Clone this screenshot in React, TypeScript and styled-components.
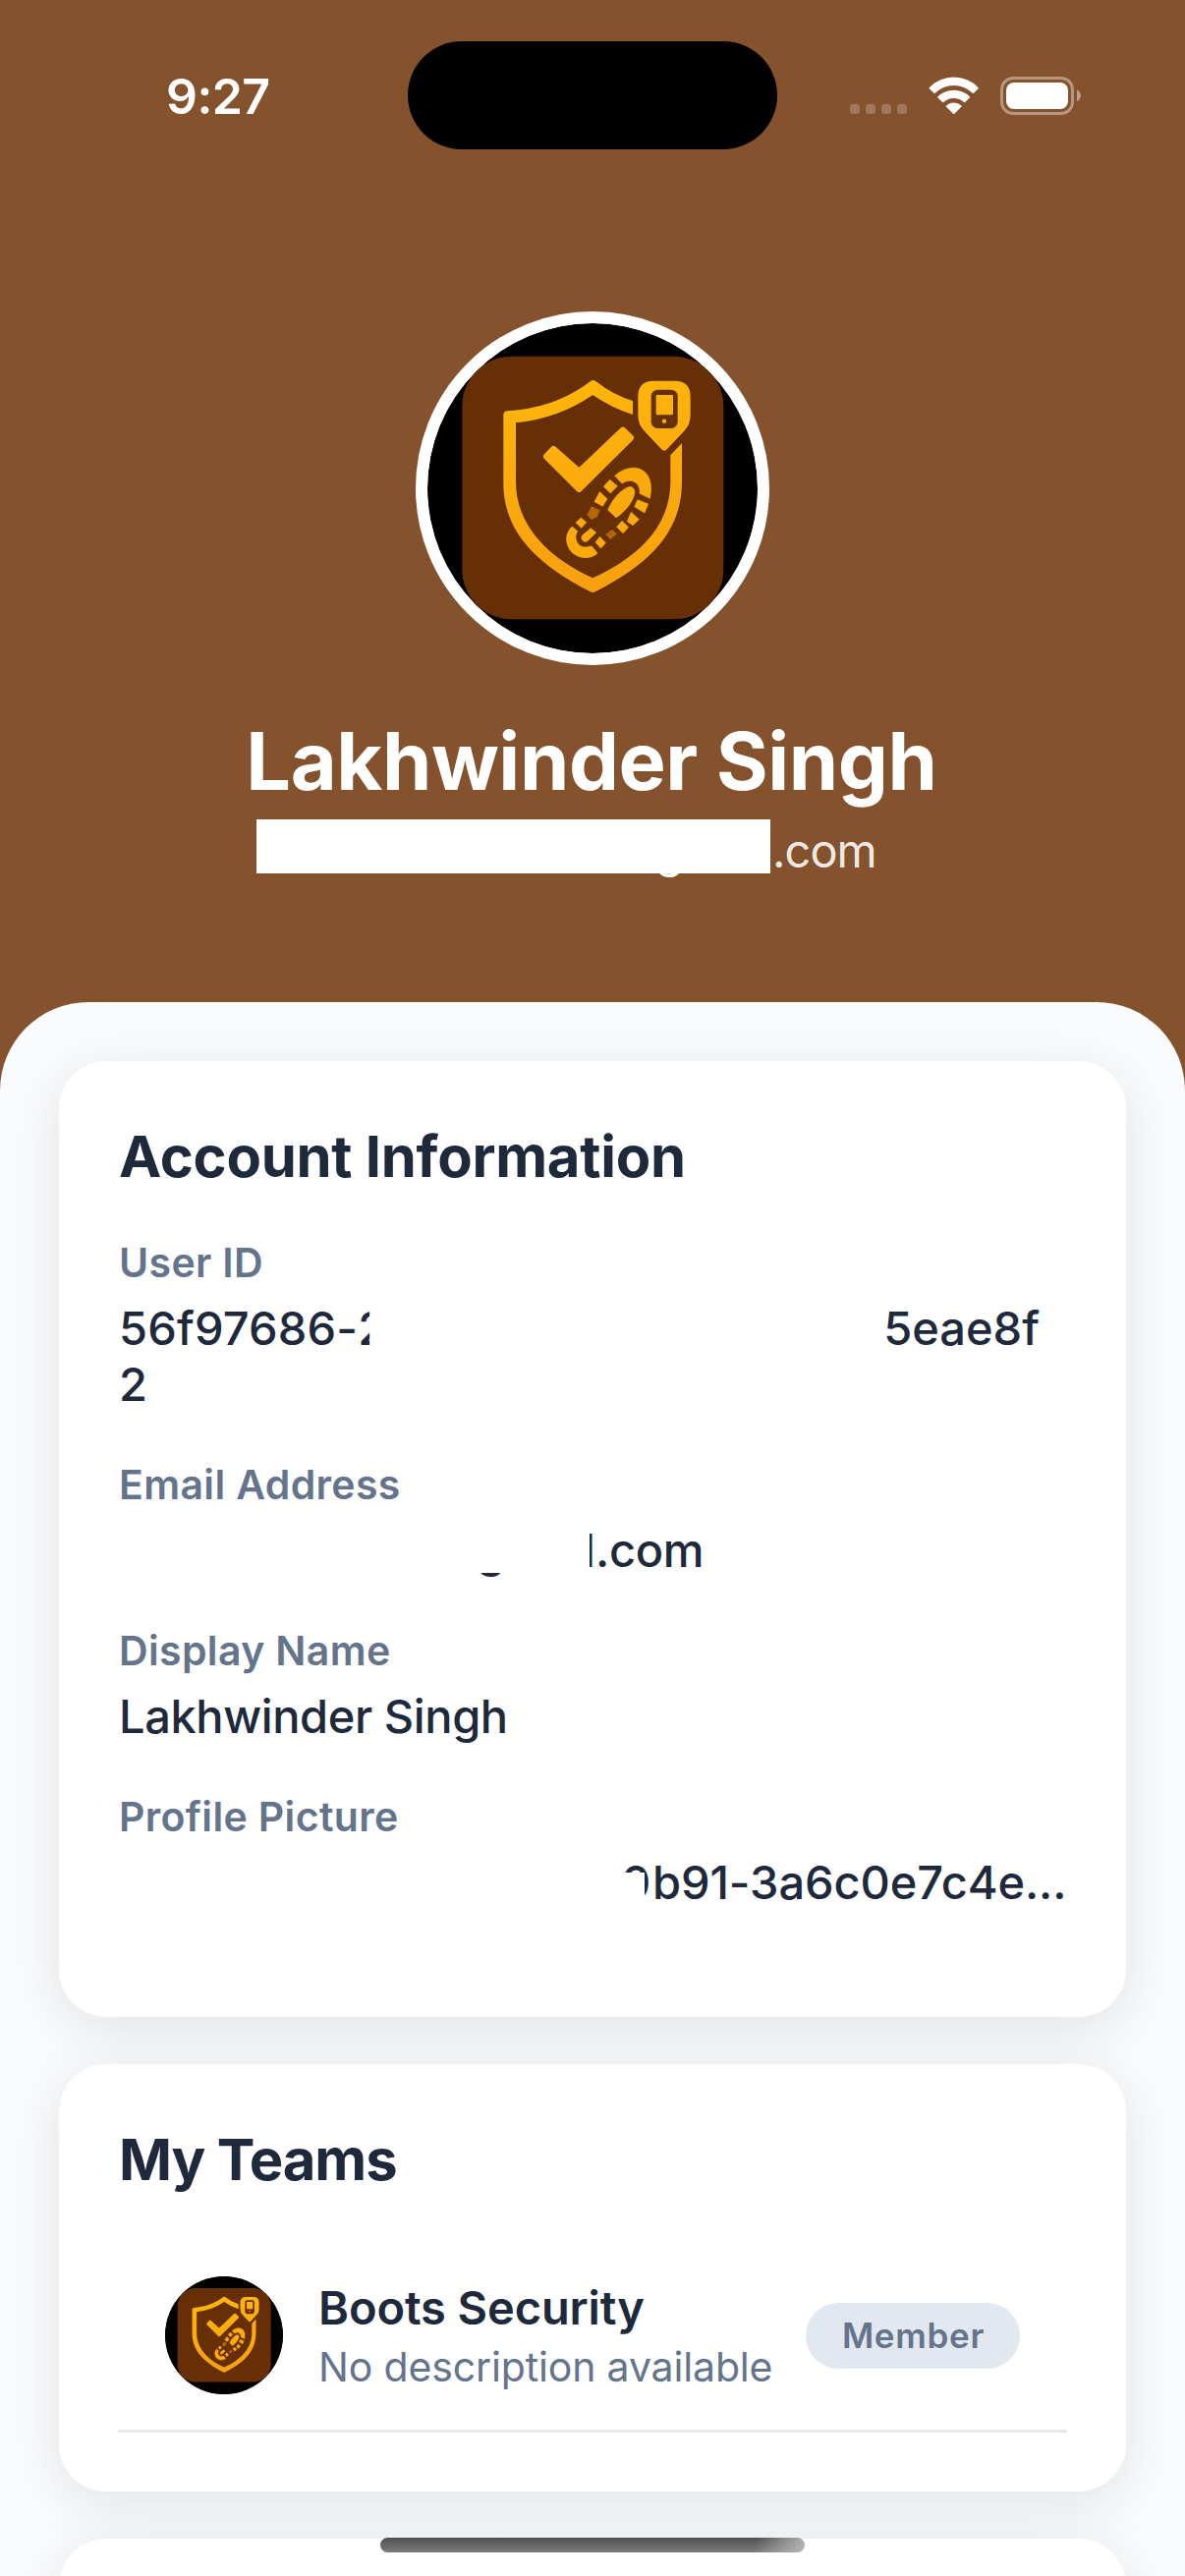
import React from "react";
import styled, { createGlobalStyle } from "styled-components";

const GlobalStyle = createGlobalStyle`
  *, *::before, *::after { box-sizing: border-box; }
  html, body { margin: 0; padding: 0; }
  body { overflow: hidden; background: #84522d; }
`;

const Screen = styled.div`
  position: relative;
  display: flex;
  flex-direction: column;
  width: 1206px;
  height: 2622px;
  overflow: hidden;
  background: #84522d;
  color: #1e293b;
  font-family: Inter, "Liberation Sans", sans-serif;
`;

/* ---------- status bar ---------- */

const StatusBar = styled.div`
  display: grid;
  grid-template-columns: 415px 376px 415px;
  height: 186px;
  flex: none;
`;

const Clock = styled.div`
  padding: 67px 0 0 169px;
  color: #fff;
  font-size: 50px;
  font-weight: 600;
  line-height: 62px;
  letter-spacing: -0.6px;
`;

const Island = styled.div`
  margin-top: 42px;
  height: 110px;
  border-radius: 55px;
  background: #000;
`;

const StatusIcons = styled.div`
  display: flex;
  align-items: flex-start;
  padding: 78px 0 0 74px;
`;

/* ---------- header ---------- */

const Header = styled.header`
  display: flex;
  flex-direction: column;
  align-items: center;
  height: 834px;
  flex: none;
  padding-top: 131px;
`;

const Avatar = styled.div<{ $size: number; $border?: number }>`
  flex: none;
  width: ${(p) => p.$size}px;
  height: ${(p) => p.$size}px;
  border: ${(p) => p.$border ?? 0}px solid #fff;
  border-radius: 50%;
  overflow: hidden;
  background: ${(p) => (p.$border ? "#fff" : "#000")};

  svg {
    display: block;
    width: 100%;
    height: 100%;
    border-radius: 50%;
  }
`;

const ProfileName = styled.h1`
  margin: 49px 2px 0 0;
  color: #fff;
  font-size: 81px;
  font-weight: 700;
  line-height: 98px;
  letter-spacing: -0.42px;
  white-space: nowrap;
`;

const ProfileEmail = styled.div`
  display: flex;
  align-self: flex-start;
  margin: 10px 0 0 261px;
  font-size: 47px;
  line-height: 57px;
`;

const HiddenAddress = styled.span`
  width: 523px;
  height: 55px;
  padding: 3px 0 0 406px;
  background: #fff;
  color: #fff;
`;

const EmailDomain = styled.span`
  padding: 3px 0 0 2px;
  color: rgba(255, 255, 255, 0.9);
  letter-spacing: -1px;
`;

/* ---------- sheet and cards ---------- */

const Sheet = styled.main`
  display: flex;
  flex-direction: column;
  gap: 48px;
  flex: none;
  height: 1700px;
  padding: 60px 60px 0;
  border-radius: 90px 90px 0 0;
  background: #f9fbfc;
`;

const Card = styled.section`
  flex: none;
  padding: 60px;
  border-radius: 48px;
  background: #fff;
  box-shadow: 0 12px 60px rgba(0, 0, 0, 0.1);
`;

const CardTitle = styled.h2<{ $tracking: number }>`
  margin: 0 0 46px;
  padding-left: 1px;
  font-size: 58px;
  font-weight: 700;
  line-height: 74px;
  letter-spacing: ${(p) => p.$tracking}px;
`;

const Field = styled.div`
  display: flex;
  flex-direction: column;
  gap: 13px;
  margin-bottom: 49px;
  padding-left: 1px;
`;

const FieldLabel = styled.div`
  color: #64748b;
  font-size: 41px;
  font-weight: 600;
  line-height: 50px;
  letter-spacing: 0.35px;
`;

const FieldValue = styled.div`
  font-size: 47px;
  font-weight: 500;
  line-height: 57px;
  white-space: nowrap;
`;

const ValueLine = styled.div`
  display: flex;
  height: 57px;
`;

const Segment = styled.span<{ $tracking?: number }>`
  letter-spacing: ${(p) => p.$tracking ?? 0}px;
`;

const Blank = styled.span<{ $width: number }>`
  flex: none;
  width: ${(p) => p.$width}px;
`;

/* A glyph of which only a part stays visible beside the blanked-out text. */
const PartialGlyph = styled.span<{ $width: number; $clip: string }>`
  flex: none;
  width: ${(p) => p.$width}px;
  clip-path: ${(p) => p.$clip};
`;

/* ---------- teams ---------- */

const TeamRow = styled.div`
  display: flex;
  align-items: center;
  gap: 36px;
  padding: 36px 48px;
  border-bottom: 3px solid #e5e7eb;
`;

const TeamText = styled.div`
  display: flex;
  flex: 1;
  flex-direction: column;
  gap: 7px;
  min-width: 0;
  white-space: nowrap;
`;

const TeamName = styled.div`
  font-size: 47px;
  font-weight: 600;
  line-height: 57px;
  letter-spacing: -0.1px;
`;

const TeamDescription = styled.div`
  color: #64748b;
  font-size: 41px;
  line-height: 50px;
  letter-spacing: -0.15px;
`;

const RoleBadge = styled.div`
  flex: none;
  margin-left: -36px;
  padding: 12px 36px 12px 37px;
  border-radius: 36px;
  background: #e2e8f0;
  color: #64748b;
  font-size: 35px;
  font-weight: 600;
  line-height: 43px;
  letter-spacing: 0.7px;
`;

const EmptyCard = styled(Card)`
  height: 300px;
`;

const HomeIndicator = styled.div`
  position: absolute;
  left: 387px;
  bottom: 24px;
  width: 432px;
  height: 15px;
  border-radius: 7.5px;
  background:
    linear-gradient(100deg, rgba(190, 190, 190, 0) 88%, rgba(190, 190, 190, 0.9) 100%),
    linear-gradient(#4e4f50, #7c7c7c);
`;

function SystemIcons() {
  return (
    <svg width="236" height="40" viewBox="15 18 236 40" fill="#fff">
      <g opacity="0.22">
        <rect x="15" y="46" width="10" height="10" rx="3" />
        <rect x="31" y="46" width="10" height="10" rx="3" />
        <rect x="47" y="46" width="10" height="10" rx="3" />
        <rect x="63" y="46" width="10" height="10" rx="3" />
      </g>
      <path d="M95.7 29.2A34.6 34.6 0 0 1 145.7 29.2Q146 29.8 145.4 30.4L141 34.8Q140.4 35.2 139.8 34.7A27.8 27.8 0 0 0 101.6 34.7Q101 35.2 100.4 34.8L96 30.4Q95.4 29.8 95.7 29.2Z" />
      <path d="M104.3 38.5A23.3 23.3 0 0 1 137.1 38.5Q137.4 39 136.9 39.5L132.2 44Q131.6 44.4 131 44A15.4 15.4 0 0 0 110.4 44Q109.8 44.4 109.2 44L104.5 39.5Q104 39 104.3 38.5Z" />
      <path d="M113 47.4A12 12 0 0 1 128.4 47.4Q129 48 128.4 48.7L121.3 55.7Q120.7 56.2 120.1 55.7L113 48.7Q112.4 48 113 47.4Z" />
      <rect x="169.5" y="19.5" width="72" height="36" rx="11.5" fill="none" stroke="#fff" strokeWidth="3" opacity="0.4" />
      <rect x="174" y="24" width="63" height="27" rx="8" />
      <path d="M246 31.4C248.6 32.5 250 34.7 250 37.3S248.6 42.1 246 43.2Z" opacity="0.45" />
    </svg>
  );
}

function ShieldLogo({ id }: { id: string }) {
  const gold = `url(#${id})`;
  return (
    <svg viewBox="105 87 1008 1008">
      <defs>
        <linearGradient id={id} gradientUnits="userSpaceOnUse" x1="560" y1="260" x2="640" y2="910">
          <stop offset="0" stopColor="#ffb50a" />
          <stop offset="1" stopColor="#f6a00f" />
        </linearGradient>
      </defs>
      <rect x="105" y="87" width="1008" height="1008" fill="#000" />
      <rect x="211" y="188" width="798" height="803" rx="152" fill="#672f06" />
      <g fill={gold}>
        <path d="M603 264Q611 258 619 264Q672 306 732 324V366Q668 346 610 306Q505 378 375 391V570C375 700 468 800 610 865C752 800 847 705 847 570V490L882 453V570C882 720 790 819 619 906Q610 912 601 906C430 819 337 718 337 575V368Q337 355 350 355C440 349 528 322 603 264Z" />
        <path d="M490 472L568 541L702 414L725 437L568 593L469 494Z" stroke={gold} strokeWidth="20" strokeLinejoin="round" />
        <path d="M796 263H860Q908 263 908 311V369Q908 396 888 417L837 471Q828 481 819 471L768 417Q748 396 748 369V311Q748 263 796 263Z" />
      </g>
      <rect x="788" y="290" width="81" height="118" rx="20" fill="#672f06" />
      <rect x="803" y="306" width="52" height="61" rx="3" fill={gold} />
      <circle cx="828" cy="386" r="6.5" fill={gold} />
      <g transform="translate(480 480)" fill="#fbaa0c" stroke="#fbaa0c" strokeWidth="2" strokeLinejoin="round">
        <path d="M197 73C220 53 245 45 267 50C301 58 315 96 304 142L273 127C276 105 263 89 243 88C234 88 228 91 219 96Z" />
        <path d="M176 177C187 152 209 118 240 107C252 104 260 115 257 128C252 155 225 185 201 201Z" />
        <path d="M182 85L205 104L184 126L163 106Z" />
        <path d="M151 122L174 143L160 166L135 152Z" />
        <path d="M94 201L110 215L95 232L78 216Z" />
        <path d="M67 228L84 243C73 254 78 275 88 284C100 294 113 291 126 287L144 309C134 319 121 323 106 323C78 322 53 302 50 272C49 253 54 240 67 228Z" />
        <path d="M124 233L140 246L115 271C103 281 88 265 100 253Z" />
        <path d="M267 146L299 159L288 186L257 167Z" />
        <path d="M247 184L271 206L252 224L235 212Z" />
        <path d="M219 211L239 230L222 248L203 229Z" />
        <path d="M152 259L169 278L154 294L138 276Z" />
        <g fill="#b46509" stroke="none">
          <path d="M126 166L152 178L143 198L126 208L112 191Z" />
          <path d="M188 237L204 250L184 267L169 252Z" />
        </g>
      </g>
    </svg>
  );
}

export default function App() {
  return (
    <>
      <GlobalStyle />
      <Screen>
        <StatusBar>
          <Clock>9:27</Clock>
          <Island />
          <StatusIcons>
            <SystemIcons />
          </StatusIcons>
        </StatusBar>

        <Header>
          <Avatar $size={360} $border={12}>
            <ShieldLogo id="gold-profile" />
          </Avatar>
          <ProfileName>Lakhwinder Singh</ProfileName>
          <ProfileEmail>
            <HiddenAddress>g</HiddenAddress>
            <EmailDomain>.com</EmailDomain>
          </ProfileEmail>
        </Header>

        <Sheet>
          <Card>
            <CardTitle $tracking={-0.28}>Account Information</CardTitle>
            <Field>
              <FieldLabel>User ID</FieldLabel>
              <FieldValue>
                <ValueLine>
                  <Segment $tracking={0.15}>56f97686-</Segment>
                  <PartialGlyph $width={14} $clip="inset(0 2px 0 0)">2</PartialGlyph>
                  <Blank $width={521} />
                  <Segment>5eae8f</Segment>
                </ValueLine>
                <ValueLine>2</ValueLine>
              </FieldValue>
            </Field>
            <Field>
              <FieldLabel>Email Address</FieldLabel>
              <FieldValue>
                <ValueLine>
                  <Blank $width={364} />
                  <PartialGlyph $width={30} $clip="inset(52px 0 -10px 0)">g</PartialGlyph>
                  <Blank $width={79} />
                  <PartialGlyph $width={12} $clip="inset(0 0 0 6px)">l</PartialGlyph>
                  <Segment $tracking={-0.3}>.com</Segment>
                </ValueLine>
              </FieldValue>
            </Field>
            <Field>
              <FieldLabel>Display Name</FieldLabel>
              <FieldValue>
                <ValueLine>
                  <Segment $tracking={-0.4}>Lakhwinder Singh</Segment>
                </ValueLine>
              </FieldValue>
            </Field>
            <Field>
              <FieldLabel>Profile Picture</FieldLabel>
              <FieldValue>
                <ValueLine>
                  <Blank $width={511} />
                  <PartialGlyph $width={32} $clip="polygon(0 0, 100% 0, 100% 42px, 24px 42px, 24px 19px, 0 19px)">
                    0
                  </PartialGlyph>
                  <Segment $tracking={-0.1}>b91-3a6c0e7c4e...</Segment>
                </ValueLine>
              </FieldValue>
            </Field>
          </Card>

          <Card>
            <CardTitle $tracking={-1.15}>My Teams</CardTitle>
            <TeamRow>
              <Avatar $size={120}>
                <ShieldLogo id="gold-team" />
              </Avatar>
              <TeamText>
                <TeamName>Boots Security</TeamName>
                <TeamDescription>No description available</TeamDescription>
              </TeamText>
              <RoleBadge>Member</RoleBadge>
            </TeamRow>
          </Card>

          <EmptyCard />
        </Sheet>

        <HomeIndicator />
      </Screen>
    </>
  );
}
